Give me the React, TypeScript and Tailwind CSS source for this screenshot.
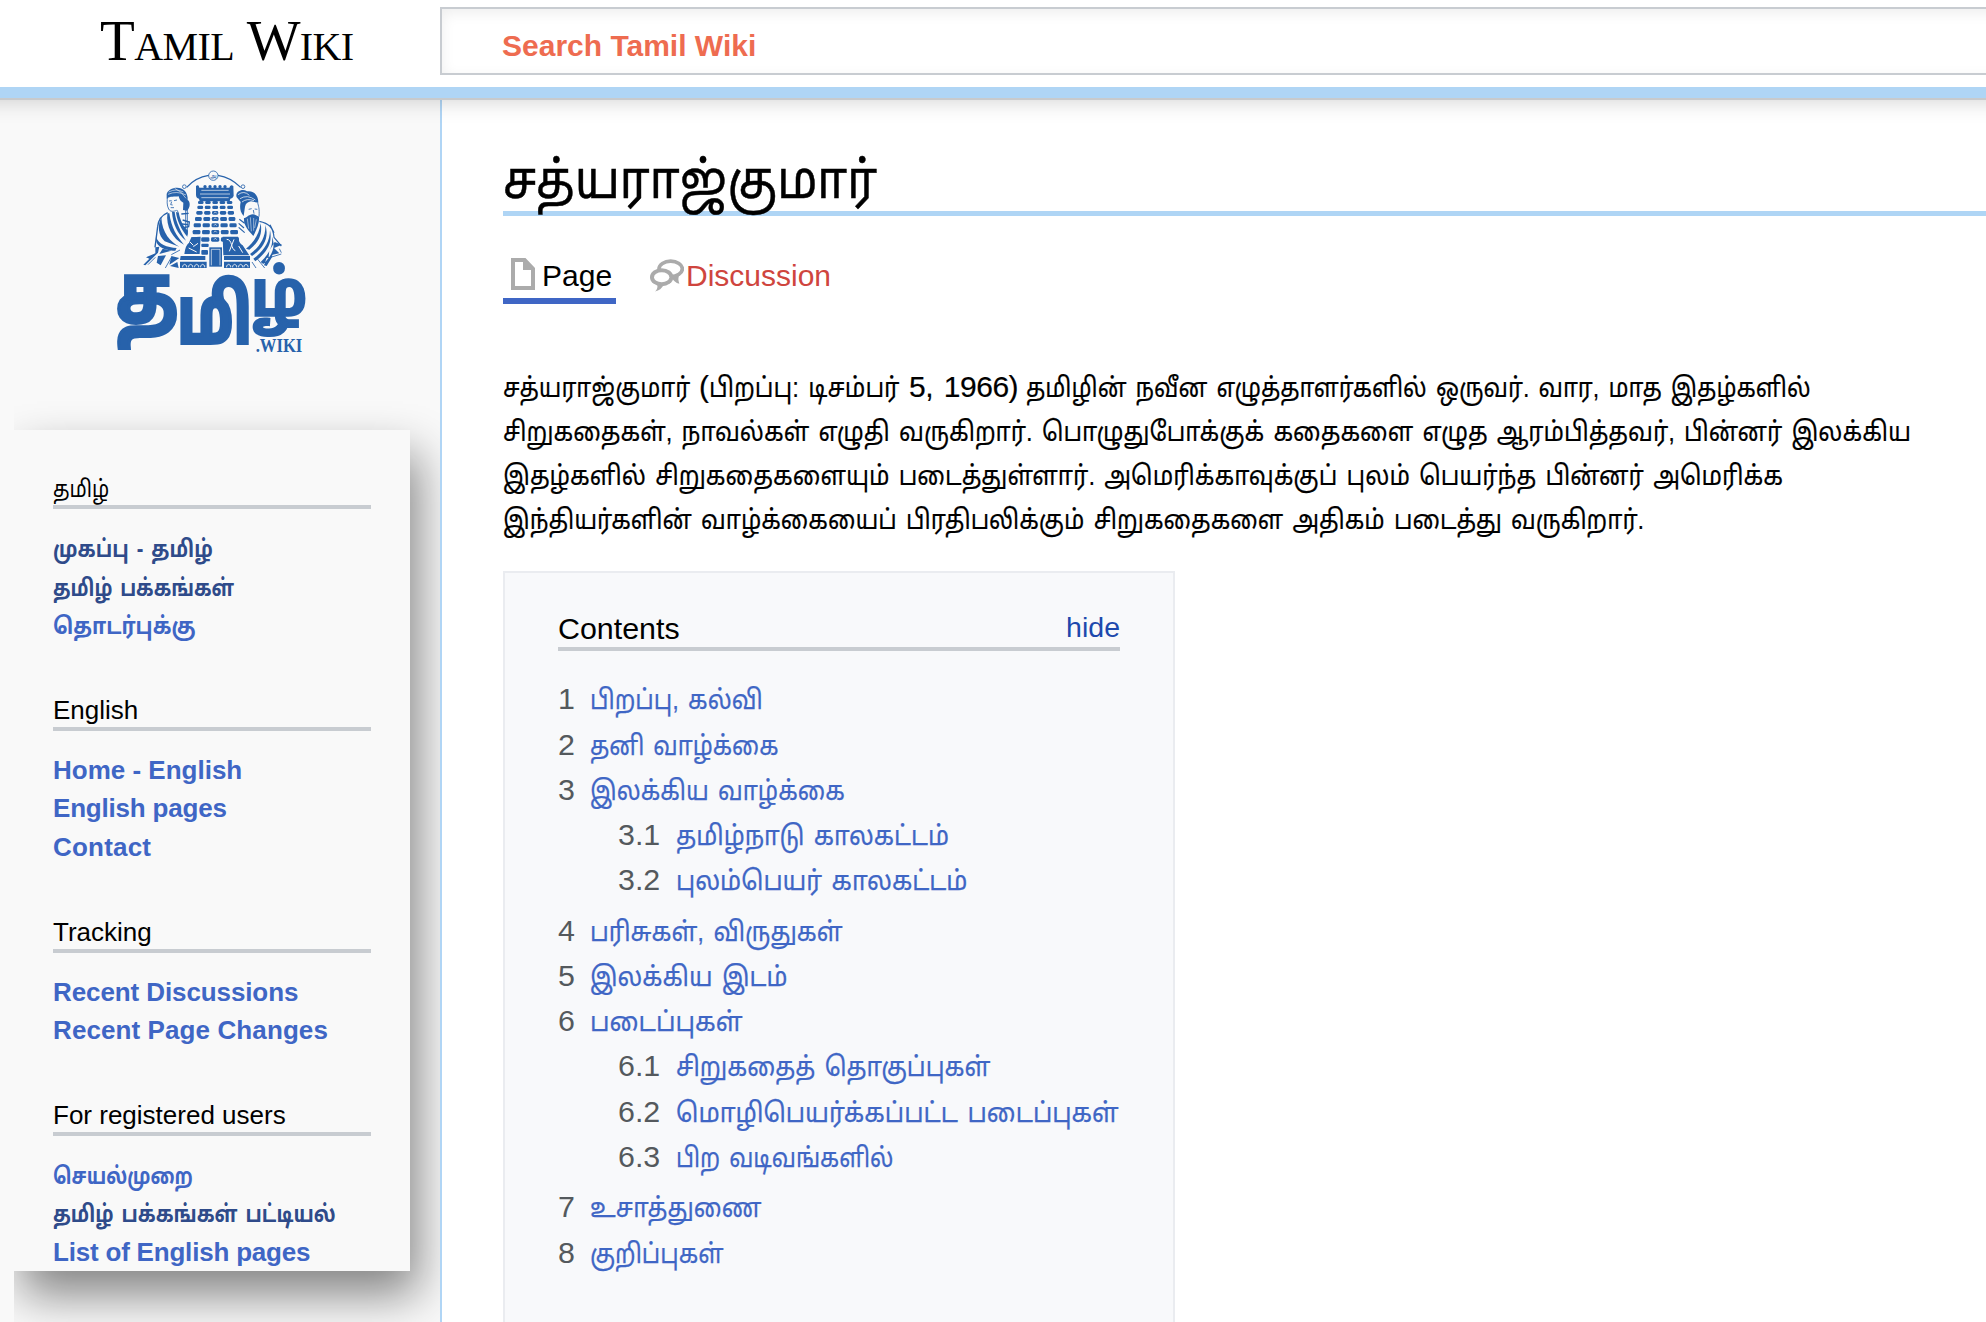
import { clsx } from 'clsx'

type NavItem = { label: string; visited?: boolean; className?: string }
type NavGroup = { title: string; titleClassName?: string; items: NavItem[] }
type TocItem = { number: string; label: string; className?: string; children?: TocItem[] }

// Tamil runs are set smaller and narrower than the Latin text beside them
const navGroups: NavGroup[] = [
  {
    title: 'தமிழ்',
    titleClassName: 'text-[23.5px] scale-x-[0.854]',
    items: [
      { label: 'முகப்பு - தமிழ்', visited: true, className: 'text-[23.5px] scale-x-[0.845]' },
      { label: 'தமிழ் பக்கங்கள்', visited: true, className: 'text-[23.5px] scale-x-[0.817]' },
      { label: 'தொடர்புக்கு', className: 'text-[23.5px] scale-x-[0.873]' },
    ],
  },
  {
    title: 'English',
    items: [
      { label: 'Home - English' },
      { label: 'English pages', className: 'tracking-[-0.2px]' },
      { label: 'Contact', className: 'tracking-[0.2px]' },
    ],
  },
  {
    title: 'Tracking',
    items: [
      { label: 'Recent Discussions', className: 'tracking-[-0.1px]' },
      { label: 'Recent Page Changes', className: 'tracking-[0.1px]' },
    ],
  },
  {
    title: 'For registered users',
    items: [
      { label: 'செயல்முறை', className: 'text-[23.5px] scale-x-[0.8]' },
      { label: 'தமிழ் பக்கங்கள் பட்டியல்', visited: true, className: 'text-[23.5px] scale-x-[0.833]' },
      { label: 'List of English pages', className: 'tracking-[-0.2px]' },
    ],
  },
]

const tocItems: TocItem[] = [
  { number: '1', label: 'பிறப்பு, கல்வி', className: 'scale-x-[0.879]' },
  { number: '2', label: 'தனி வாழ்க்கை', className: 'scale-x-[0.866]' },
  {
    number: '3',
    label: 'இலக்கிய வாழ்க்கை',
    className: 'scale-x-[0.877]',
    children: [
      { number: '3.1', label: 'தமிழ்நாடு காலகட்டம்', className: 'scale-x-[0.908]' },
      { number: '3.2', label: 'புலம்பெயர் காலகட்டம்', className: 'scale-x-[0.912]' },
    ],
  },
  { number: '4', label: 'பரிசுகள், விருதுகள்', className: 'scale-x-[0.895]' },
  { number: '5', label: 'இலக்கிய இடம்', className: 'scale-x-[0.905]' },
  {
    number: '6',
    label: 'படைப்புகள்',
    className: 'scale-x-[0.929]',
    children: [
      { number: '6.1', label: 'சிறுகதைத் தொகுப்புகள்', className: 'scale-x-[0.896]' },
      { number: '6.2', label: 'மொழிபெயர்க்கப்பட்ட படைப்புகள்', className: 'scale-x-[0.92]' },
      { number: '6.3', label: 'பிற வடிவங்களில்', className: 'scale-x-[0.857]' },
    ],
  },
  { number: '7', label: 'உசாத்துணை', className: 'scale-x-[0.893]' },
  { number: '8', label: 'குறிப்புகள்', className: 'scale-x-[0.876]' },
]

const introLines = [
  [
    { text: 'சத்யராஜ்குமார்', className: 'w-[196px]', textClassName: 'text-[27px] scale-x-[0.867]' },
    { text: '(', className: 'w-[10px]', textClassName: 'text-[30px]' },
    { text: 'பிறப்பு: டிசம்பர்', className: 'w-[200px]', textClassName: 'text-[27px] scale-x-[0.89]' },
    { text: '5, 1966)', className: 'w-[117px]', textClassName: 'text-[30px] tracking-[-0.5px]' },
    {
      text: 'தமிழின் நவீன எழுத்தாளர்களில் ஒருவர். வார, மாத இதழ்களில்',
      className: '',
      textClassName: 'text-[27px] scale-x-[0.866]',
    },
  ],
  [
    {
      text: 'சிறுகதைகள், நாவல்கள் எழுதி வருகிறார். பொழுதுபோக்குக் கதைகளை எழுத ஆரம்பித்தவர், பின்னர் இலக்கிய',
      className: '',
      textClassName: 'text-[27px] scale-x-[0.883]',
    },
  ],
  [
    {
      text: 'இதழ்களில் சிறுகதைகளையும் படைத்துள்ளார். அமெரிக்காவுக்குப் புலம் பெயர்ந்த பின்னர் அமெரிக்க',
      className: '',
      textClassName: 'text-[27px] scale-x-[0.885]',
    },
  ],
  [
    {
      text: 'இந்தியர்களின் வாழ்க்கையைப் பிரதிபலிக்கும் சிறுகதைகளை அதிகம் படைத்து வருகிறார்.',
      className: '',
      textClassName: 'text-[27px] scale-x-[0.879]',
    },
  ],
]

// Rows of the temple tower, narrowing towards the top
const towerRows = [
  { y: 153, left: 322, right: 430, h: 9 },
  { y: 167, left: 320, right: 432, h: 10 },
  { y: 183, left: 317, right: 435, h: 11 },
  { y: 201, left: 313, right: 439, h: 12 },
  { y: 220, left: 309, right: 443, h: 12 },
  { y: 240, left: 306, right: 447, h: 13 },
  { y: 262, left: 302, right: 450, h: 13 },
]

function Logo() {
  return (
    <svg viewBox="0 0 720 660" className="block h-[220px] w-[240px]" fill="#2762ab" stroke="none">
      {/* Arch and medallion */}
      <g fill="none" stroke="#2762ab" strokeWidth="2.5">
        <circle cx="370" cy="77" r="14" />
        <path d="M356 76C330 80 305 95 290 112M384 76C410 80 435 95 452 112" strokeWidth="3.5" />
        <circle cx="283" cy="110" r="5.5" />
        <circle cx="459" cy="110" r="5.5" />
      </g>
      <text x="370" y="83" fontSize="17" textAnchor="middle">அ</text>

      {/* Tower */}
      <path d="M318 108q8-6 10 5h90q3-12 12-5l1 30q-3 8-10 8l-2 8h-90l-2-8q-9-2-9-12z" />
      <path d="M334 121h82M330 132h90M334 143h82" stroke="#f9f9f9" strokeWidth="2" />
      {[345, 360, 375, 390, 405].map((x) => (
        <circle key={x} cx={x} cy="110" r="5" />
      ))}
      {towerRows.map(({ y, left, right, h }) => {
        const step = (right - left) / 5
        return [0, 1, 2, 3, 4].map((i) => (
          <rect key={`${y}-${i}`} x={left + i * step + 2} y={y} width={step - 5} height={h} rx="4" />
        ))
      })}
      {[190, 208, 227, 247, 269].map((y) => (
        <path key={y} d={`M372 ${y}q4-9 8 0`} fill="none" stroke="#f9f9f9" strokeWidth="2" />
      ))}
      <path d="M304 262l28-2-3 52h-46q3-26 14-34zM398 260h46q2 18 14 26l20 30h-78z" />
      <path d="M300 276l10 10M296 294l24 12M310 290l14-10M410 268c18 0 12 30 26 34M432 268l-14 36M446 288l12 20" fill="none" stroke="#f9f9f9" strokeWidth="3" />
      <rect x="334" y="281" width="22" height="10" rx="3" />
      <rect x="334" y="300" width="20" height="14" rx="3" />
      <path d="M272 318h74v12h-76zM402 318h78v12h-78zM270 335h80v19h-80zM402 335h78v19h-78z" />
      <path d="M358 292h38v58h-38z" />
      <path d="M364 346v-48h26v48" fill="none" stroke="#f9f9f9" strokeWidth="2" />
      {[284, 302, 320, 338, 416, 434, 452, 468].map((x) => (
        <path key={x} d={`M${x - 6} 352v-5q6-8 12 0v5`} fill="none" stroke="#f9f9f9" strokeWidth="2.5" />
      ))}

      {/* Woman on the left */}
      <path d="M230 132c4-18 38-27 54-10 6 6 10 18 9 28 9 5 8 24-2 32l-12-2 1-22c-8-3-12-10-14-19-12 2-26-1-36 7z" />
      <path d="M236 126q22-12 44 0M234 133q26-12 54 2M254 115q20 8 34 30" fill="none" stroke="#f9f9f9" strokeWidth="1.8" />
      <g fill="none" stroke="#2762ab" strokeWidth="2.5">
        <path d="M233 138c-2 14-3 28 3 39 5 9 14 8 24 4M237 153l8-1M252 152l9-2M245 155l-3 9 6 1M242 173h10M262 181l4 12" />
        <path d="M287 156v92M292 156v98" />
        <path d="M233 188c-18 8-28 20-30 42l-8 62M278 210l20 6-2 14-16 3M276 222l18 2M274 192l22-2" strokeWidth="4" />
      </g>
      <path d="M214 202c-12 26-10 54 10 72l44 16c-26-14-52-40-54-88zM232 190c-4 38 14 76 50 94-22-26-38-50-44-94zM246 186c2 34 16 66 42 86-16-28-30-54-34-86zM198 260c6 22 34 32 62 34l-4 8c-34 0-62-14-58-42zM258 186c2 24 16 54 34 74l2-18c-16-12-24-36-28-54z" />
      <path d="M196 292l12-2-4 18-38 38-6-2 18-18-10-4 28-12zM204 318l24-2-16 30-12-8zM218 296l26 6-36 10zM244 318l24 6-30 20zM240 348l22-12 4 18z" />
      <path d="M174 344l22-22M226 354l18-32M270 300l-26 14" fill="none" stroke="#2762ab" strokeWidth="2.5" />

      {/* Bearded poet on the right */}
      <path d="M440 142c-6-16 16-28 31-18 24-3 34 16 34 34l-22-4c-10 2-16 6-18 16l-4 28c-12-12-12-30-9-42z" />
      <path d="M444 134q18-14 34 2M450 146q22-14 46 4M456 156q14-12 36-4" fill="none" stroke="#f9f9f9" strokeWidth="2.2" />
      <path d="M462 204c6 2 11-7 16-8 8-4 14-4 20 0l9 4c2 18-6 36-17 58-12-14-30-30-28-54z" />
      <path d="M472 206l4 30M481 202l3 42M491 204v38M499 208l-5 26" fill="none" stroke="#f9f9f9" strokeWidth="1.6" />
      <g fill="none" stroke="#2762ab" strokeWidth="2.5">
        <path d="M503 158c2 10 6 16 4 42M476 178l9-2M494 177l8 1M490 180l2 11" />
        <path d="M508 214c28 6 42 18 44 48l22 26M448 208l16 12M446 220l16 14M446 232l18 16M540 224l12 24" strokeWidth="3.5" />
        <path d="M542 322l32-10M486 336l12 18M500 324l24 30M568 296l6 12" />
      </g>
      <path d="M512 220c-4 34-22 58-44 76l10 3c28-22 40-46 34-79zM526 224c2 38-18 68-46 88l6 6c36-24 52-56 40-94zM540 240c0 38-22 66-50 86l6 8c36-28 52-56 44-94zM546 260c4 34-14 56-34 76l8 6c26-26 38-50 26-82zM554 276l22 8-24 10 16 16-20 4-14 22 4-34zM530 324l18-6-18 30-8-2z" />

      {/* Wordmark */}
      <g fontWeight="700" stroke="#2762ab" strokeWidth="12">
        <text x="78" y="516" fontSize="244" textLength="186" lengthAdjust="spacingAndGlyphs">
          த
        </text>
        <text x="262" y="578" fontSize="234" textLength="224" lengthAdjust="spacingAndGlyphs">
          மி
        </text>
        <text x="482" y="498" fontSize="190" textLength="170" lengthAdjust="spacingAndGlyphs" strokeWidth="6">
          ழ்
        </text>
      </g>
      <text x="497" y="606" fontFamily="Liberation Serif" fontSize="56" fontWeight="700" textLength="140" lengthAdjust="spacingAndGlyphs">
        .WIKI
      </text>
    </svg>
  )
}

function PageIcon() {
  return (
    <svg viewBox="0 0 24 32" className="block h-8 w-6" fill="#ababab">
      <path fillRule="evenodd" d="M0 0h14.5L24 10v22H0zM4 4v24h16V12h-8V4z" />
    </svg>
  )
}

function DiscussionIcon() {
  return (
    <svg viewBox="0 0 102 98" className="block h-[33px] w-[34px]" fill="#ababab">
      <ellipse cx="62" cy="29" rx="35" ry="23" fill="none" stroke="#ababab" strokeWidth="11" />
      <path d="M68 50L89 44Q82 58 88 74Q72 70 66 56z" />
      <ellipse cx="35" cy="54" rx="35" ry="27" />
      <ellipse cx="35" cy="54" rx="23" ry="15" fill="#fff" />
      <path d="M22 77L40 78Q34 92 15 97Q24 90 22 77z" />
    </svg>
  )
}

function Sidebar() {
  return (
    <aside className="w-[442px] shrink-0 border-r-2 border-[#b0d5f5] bg-[#f9f9f9]">
      <div className="flex h-[272px] pt-[52px] pl-[90px]">
        <Logo />
      </div>
      <div className="ml-[14px] h-[952px] overflow-hidden pt-[60px]">
        <nav className="h-[841px] w-[396px] bg-[#f9f9f9] pt-10 pl-[39px] shadow-[8px_24px_44px_rgba(0,0,0,0.47)]">
          <div className="flex flex-col gap-[47px]">
            {navGroups.map((group) => (
              <section key={group.title} className="w-[318px]">
                <h3 className="h-[39px] border-b-4 border-[#c8ccd1] pt-[2px] text-[26px] leading-[32px]">
                  <span className={clsx('inline-block origin-left leading-none', group.titleClassName)}>
                    {group.title}
                  </span>
                </h3>
                <ul className="pt-5 text-[26px] leading-[38.6px] font-bold">
                  {group.items.map((item) => (
                    <li key={item.label} className="h-[38.6px]">
                      <a
                        href="#"
                        className={clsx(
                          'inline-block origin-left leading-none whitespace-nowrap',
                          item.visited ? 'text-[#2f4b8a] [word-spacing:3px]' : 'text-[#3f66c5]',
                          item.className,
                        )}
                      >
                        {item.label}
                      </a>
                    </li>
                  ))}
                </ul>
              </section>
            ))}
          </div>
        </nav>
      </div>
    </aside>
  )
}

function TocRow({ item, nested }: { item: TocItem; nested?: boolean }) {
  return (
    <div className="flex h-[45.2px] items-baseline whitespace-nowrap">
      <span className={clsx('shrink-0 text-[#54595d]', nested ? 'w-[57.5px]' : 'w-8')}>{item.number}</span>
      <a
        href="#"
        className={clsx(
          'origin-left text-[27px] leading-none text-[#3f66c5] [word-spacing:3px] [-webkit-text-stroke:0.25px]',
          item.className,
        )}
      >
        {item.label}
      </a>
    </div>
  )
}

function TableOfContents() {
  return (
    <div className="h-[780px] w-[672px] border-2 border-[#eaecf0] bg-[#f8f9fb] px-[53px] pt-[37px]">
      <div className="flex h-[41px] items-start justify-between border-b-4 border-[#c8ccd1]">
        <h2 className="text-[30.4px] leading-[37px]">Contents</h2>
        <a href="#" className="text-[28.5px] leading-[35px] text-[#1d49ad]">
          hide
        </a>
      </div>
      <ul className="pt-[25px] text-[30.4px] leading-[45.2px]">
        {tocItems.map((item) => (
          <li key={item.number}>
            <TocRow item={item} />
            {item.children && (
              <ul className="pb-[5.5px] pl-[60px]">
                {item.children.map((child) => (
                  <li key={child.number}>
                    <TocRow item={child} nested />
                  </li>
                ))}
              </ul>
            )}
          </li>
        ))}
      </ul>
    </div>
  )
}

export default function App() {
  return (
    <div className="h-[1322px] w-[1986px] overflow-hidden bg-white font-['Liberation_Sans','Noto_Sans_Tamil','Noto_Sans',sans-serif] text-black">
      <header className="relative z-10 -mx-10 flex h-[98px] border-b-[11px] border-[#afd5f5] bg-white px-10 shadow-[0_2px_0_#c8cacc,0_4px_20px_rgba(0,0,0,0.17)]">
        <a
          href="#"
          className="w-[440px] shrink-0 pl-[100px] font-['Liberation_Serif',serif] text-[57px] leading-[82px] tracking-[-0.6px] whitespace-nowrap [font-variant:small-caps]"
        >
          Tamil Wiki
        </a>
        <div className="mt-[7px] flex h-[68px] w-[1600px] shrink-0 items-center border-2 border-[#c8ccd1] pl-[60px] shadow-[inset_0_4px_14px_rgba(0,0,0,0.07)]">
          <span className="pt-[8px] text-[30px] font-bold text-[#ee6c50]">Search Tamil Wiki</span>
        </div>
      </header>

      <div className="flex h-[1224px]">
        <Sidebar />
        <main className="w-[1544px] pl-[61px]">
          <h1 className="h-[118px] border-b-[5px] border-[#afd5f5] pt-[44px] text-[52px] leading-[76px] whitespace-nowrap">
            <span className="inline-block origin-left scale-x-[0.9] [-webkit-text-stroke:0.5px]">சத்யராஜ்குமார்</span>
          </h1>
          <div className="flex pt-[40px] text-[30px]">
            <a href="#" className="flex h-[48px] w-[113px] border-b-[6px] border-[#3f66c5] pl-2 leading-[39px]">
              <span className="w-[31px] pt-[2px]">
                <PageIcon />
              </span>
              <span>Page</span>
            </a>
            <a href="#" className="ml-[34px] flex leading-[39px] text-[#cf453e]">
              <span className="w-[36px] pt-[3px]">
                <DiscussionIcon />
              </span>
              <span>Discussion</span>
            </a>
          </div>
          <div className="pt-[60px] pb-[31px] text-[30.4px] leading-[44.1px] whitespace-nowrap">
            {introLines.map((segments, i) => (
              <p key={i} className="flex h-[44.1px] items-baseline">
                {segments.map((segment) => (
                  <span key={segment.text} className={clsx('shrink-0', segment.className)}>
                    <span
                      className={clsx(
                        'inline-block origin-left leading-none [word-spacing:3px] [-webkit-text-stroke:0.2px]',
                        segment.textClassName,
                      )}
                    >
                      {segment.text}
                    </span>
                  </span>
                ))}
              </p>
            ))}
          </div>
          <TableOfContents />
        </main>
      </div>
    </div>
  )
}
